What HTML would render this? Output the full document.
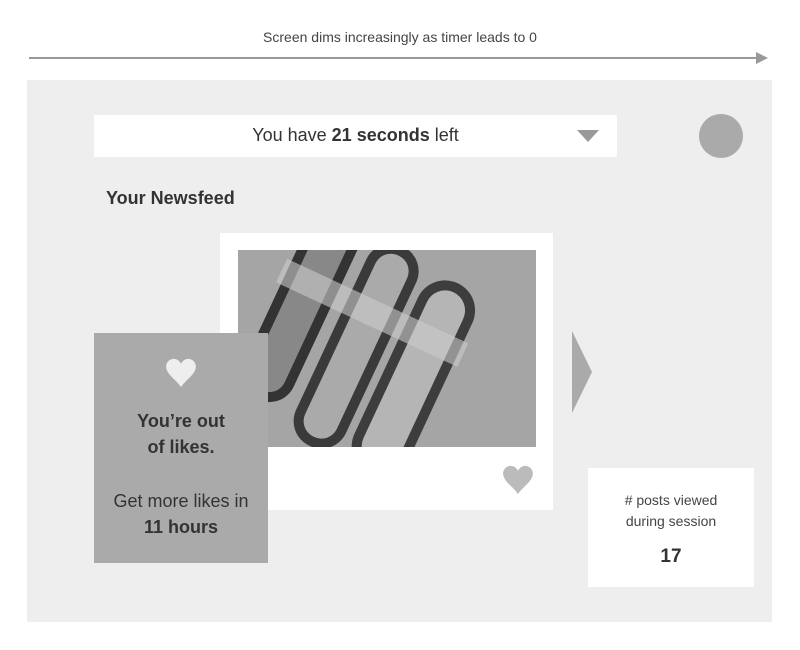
<!DOCTYPE html>
<html><head><style>
body{margin:0;width:800px;height:650px;background:#fff;font-family:"Liberation Sans",sans-serif;position:relative;overflow:hidden}
.a{position:absolute}
</style></head><body>
<div class="a" style="left:0;top:29px;width:800px;text-align:center;font-size:14px;color:#444">Screen dims increasingly as timer leads to 0</div>
<div class="a" style="left:29px;top:57px;width:730px;height:2px;background:#999"></div>
<div class="a" style="left:756px;top:52px;width:0;height:0;border-left:12px solid #999;border-top:6px solid transparent;border-bottom:6px solid transparent"></div>
<div class="a" style="left:27px;top:80px;width:745px;height:542px;background:#eee"></div>
<div class="a" style="left:94px;top:115px;width:523px;height:42px;background:#fff"></div>
<div class="a" style="left:94px;top:125px;width:523px;text-align:center;font-size:18px;color:#333">You have <b>21 seconds</b> left</div>
<div class="a" style="left:577px;top:130px;width:0;height:0;border-top:12px solid #999;border-left:11px solid transparent;border-right:11px solid transparent"></div>
<div class="a" style="left:699px;top:114px;width:44px;height:44px;border-radius:50%;background:#aaa"></div>
<div class="a" style="left:106px;top:188px;font-size:18px;font-weight:bold;color:#333">Your Newsfeed</div>
<div class="a" style="left:220px;top:233px;width:333px;height:277px;background:#fff"></div>
<svg class="a" style="left:238px;top:250px" width="298" height="197" viewBox="0 0 298 197">
<rect width="298" height="197" fill="#a5a5a5"/>
<g transform="rotate(25 150 100)">
<rect x="25" y="-30" width="55" height="230" rx="27" fill="#333"/>
<rect x="35" y="-20" width="35" height="210" rx="17" fill="#888"/>
<rect x="92" y="0" width="55" height="220" rx="27" fill="#3a3a3a"/>
<rect x="102" y="10" width="35" height="200" rx="17" fill="#aaa"/>
<rect x="155" y="10" width="60" height="210" rx="30" fill="#3d3d3d"/>
<rect x="165" y="20" width="40" height="190" rx="20" fill="#b5b5b5"/>
<rect x="20" y="60" width="200" height="26" fill="#ccc" opacity=".6"/>
</g>
</svg>
<svg class="a" style="left:501px;top:463px" width="34" height="34" viewBox="0 0 24 24"><path d="M12 22 C9 17 1.5 13 1.5 7.5 C1.5 4.3 4 2 7 2 C9.3 2 11 3.5 12 5.5 C13 3.5 14.7 2 17 2 C20 2 22.5 4.3 22.5 7.5 C22.5 13 15 17 12 22Z" fill="#bbb"/></svg>
<div class="a" style="left:94px;top:333px;width:174px;height:230px;background:#aaa;text-align:center;color:#333">
<svg style="position:absolute;left:70px;top:23px" width="34" height="34" viewBox="0 0 24 24"><path d="M12 22 C9 17 1.5 13 1.5 7.5 C1.5 4.3 4 2 7 2 C9.3 2 11 3.5 12 5.5 C13 3.5 14.7 2 17 2 C20 2 22.5 4.3 22.5 7.5 C22.5 13 15 17 12 22Z" fill="#eee"/></svg>
<div style="position:absolute;top:75px;width:100%;font-size:18px;font-weight:bold;line-height:26px">You’re out<br>of likes.</div>
<div style="position:absolute;top:155px;width:100%;font-size:18px;line-height:26px">Get more likes in<br><b>11 hours</b></div>
</div>
<div class="a" style="left:572px;top:331px;width:0;height:0;border-left:20px solid #aaa;border-top:41px solid transparent;border-bottom:41px solid transparent"></div>
<div class="a" style="left:588px;top:468px;width:166px;height:119px;background:#fff;text-align:center;color:#444">
<div style="position:absolute;top:22px;width:100%;font-size:14px;line-height:21px">#&nbsp;posts viewed<br>during session</div>
<div style="position:absolute;top:78px;width:100%;font-size:19px;font-weight:bold;color:#333">17</div>
</div>
</body></html>
